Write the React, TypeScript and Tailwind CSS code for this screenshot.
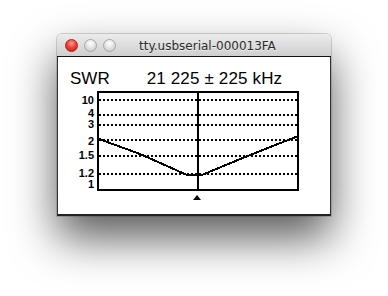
import React from "react";

const OX = 58;
const OY = 90;

const curvePage: [number, number][] = [
  [99, 140],
  [140, 155],
  [186, 175.5],
  [203, 175.5],
  [250, 156],
  [297, 137.5],
];

const gridPage = [101, 116, 126, 141, 157, 175];

const labels: { t: string; y: number }[] = [
  { t: "10", y: 105 },
  { t: "4", y: 118 },
  { t: "3", y: 129 },
  { t: "2", y: 146 },
  { t: "1.5", y: 160 },
  { t: "1.2", y: 178 },
  { t: "1", y: 189 },
];

function Chart() {
  const pts = curvePage.map(([x, y]) => `${x - OX},${y - OY}`).join(" ");
  return (
    <svg width={272} height={125} viewBox="0 0 272 125" className="block">
      {gridPage.map((y) => (
        <line
          key={y}
          x1={41}
          x2={240}
          y1={y - OY}
          y2={y - OY}
          stroke="#000"
          strokeWidth={2}
          strokeDasharray="2 2"
          shapeRendering="crispEdges"
        />
      ))}
      <rect
        x={40}
        y={3}
        width={200}
        height={98}
        fill="none"
        stroke="#000"
        strokeWidth={2}
        shapeRendering="crispEdges"
      />
      <line x1={140} x2={140} y1={3} y2={101} stroke="#000" strokeWidth={2} shapeRendering="crispEdges" />
      <polyline points={pts} fill="none" stroke="#000" strokeWidth={2} strokeLinejoin="miter" shapeRendering="crispEdges" />
      <polygon points="135,111 143,111 139,106" fill="#000" />
      {labels.map((l) => (
        <text
          key={l.t}
          x={36}
          y={l.y - OY}
          textAnchor="end"
          fontFamily="'Liberation Sans', Arial, sans-serif"
          fontWeight="bold"
          fontSize={11}
          fill="#000"
        >
          {l.t}
        </text>
      ))}
    </svg>
  );
}

function Light({ red }: { red?: boolean }) {
  return red ? (
    <div className="w-[13px] h-[13px] rounded-full border border-[#a8231c] bg-[radial-gradient(circle_at_50%_30%,#ff9c92_0%,#f0433a_45%,#b71a12_100%)]" />
  ) : (
    <div className="w-[13px] h-[13px] rounded-full border border-[#a6a6a6] bg-[radial-gradient(circle_at_50%_30%,#ffffff_0%,#e2e2e2_50%,#c4c4c4_100%)]" />
  );
}

export default function App() {
  return (
    <div className="w-[388px] h-[296px] bg-white pt-[34px] pl-[57px] overflow-hidden">
      <div className="w-[274px] rounded-t-[5px] shadow-[0_22px_45px_rgba(0,0,0,0.65),0_0_0_1px_rgba(0,0,0,0.15)]">
        <div className="h-[23px] rounded-t-[5px] border-b border-[#111] bg-gradient-to-b from-[#ececec] to-[#cfcfcf] flex items-center pl-[8px]">
          <div className="flex items-center gap-[6px]">
            <Light red />
            <Light />
            <Light />
          </div>
          <div
            className="ml-[23px] text-[12px] text-[#2a2a2a] leading-none pt-[1px]"
            style={{ fontFamily: "'DejaVu Sans', 'Lucida Grande', sans-serif", textShadow: "0 1px 0 rgba(255,255,255,0.6)" }}
          >
            tty.usbserial-000013FA
          </div>
        </div>
        <div className="h-[159px] bg-white border-x border-b-2 border-x-[#333] border-b-[#222] flex flex-col">
          <div
            className="h-[32px] pt-[12px] pl-[12px] flex text-[17px] leading-[20px] text-black"
            style={{ fontFamily: "'Liberation Sans', Arial, sans-serif" }}
          >
            <span>SWR</span>
            <span className="ml-[37px] tracking-[0.15px]">21 225 ± 225 kHz</span>
          </div>
          <Chart />
        </div>
      </div>
    </div>
  );
}
